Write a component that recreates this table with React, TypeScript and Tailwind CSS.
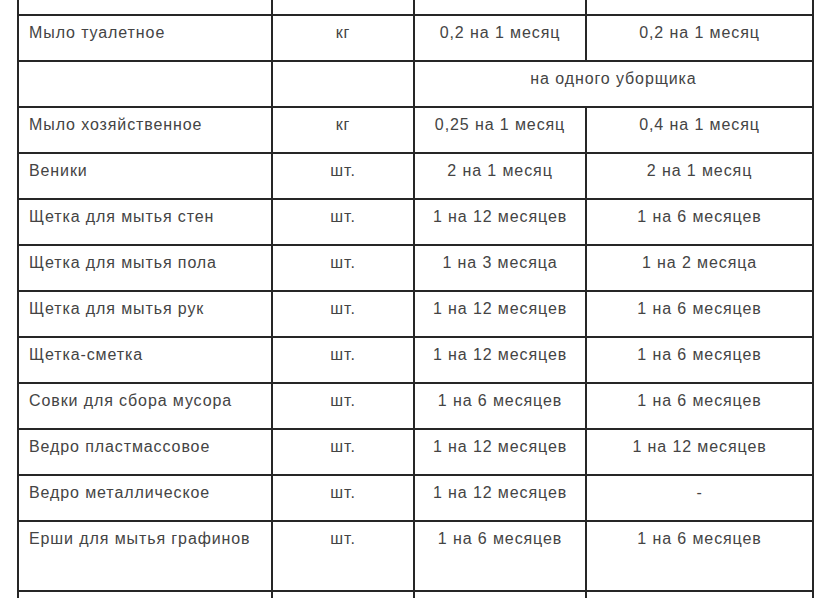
const rows: [string, string, string, string][] = [
  ["Мыло туалетное", "кг", "0,2 на 1 месяц", "0,2 на 1 месяц"],
  ["Мыло хозяйственное", "кг", "0,25 на 1 месяц", "0,4 на 1 месяц"],
  ["Веники", "шт.", "2 на 1 месяц", "2 на 1 месяц"],
  ["Щетка для мытья стен", "шт.", "1 на 12 месяцев", "1 на 6 месяцев"],
  ["Щетка для мытья пола", "шт.", "1 на 3 месяца", "1 на 2 месяца"],
  ["Щетка для мытья рук", "шт.", "1 на 12 месяцев", "1 на 6 месяцев"],
  ["Щетка-сметка", "шт.", "1 на 12 месяцев", "1 на 6 месяцев"],
  ["Совки для сбора мусора", "шт.", "1 на 6 месяцев", "1 на 6 месяцев"],
  ["Ведро пластмассовое", "шт.", "1 на 12 месяцев", "1 на 12 месяцев"],
  ["Ведро металлическое", "шт.", "1 на 12 месяцев", "-"],
  ["Ерши для мытья графинов", "шт.", "1 на 6 месяцев", "1 на 6 месяцев"],
];

const cell = "border-2 border-[#262626] align-top pt-[5px] leading-6";

export default function App() {
  return (
    <div className="h-[598px] w-[826px] overflow-hidden bg-white text-[16px] tracking-[0.9px] text-[#444] font-['Liberation_Sans',Arial,sans-serif]">
      <table className="ml-[17px] w-[795px] table-fixed border-collapse">
        <colgroup>
          <col className="w-[254px]" />
          <col className="w-[142px]" />
          <col className="w-[172px]" />
          <col className="w-[227px]" />
        </colgroup>
        <tbody>
          {/* tail of the row above */}
          <tr className="h-[15px]">
            <td className={`${cell} border-t-0`}></td>
            <td className={`${cell} border-t-0`}></td>
            <td className={`${cell} border-t-0`}></td>
            <td className={`${cell} border-t-0`}></td>
          </tr>
          {rows.map((r, i) => (
            <>
              <tr key={r[0]} className={i === rows.length - 1 ? "h-[70px]" : "h-[46px]"}>
                <td className={`${cell} pl-[10px]`}>{r[0]}</td>
                <td className={`${cell} text-center`}>{r[1]}</td>
                <td className={`${cell} text-center`}>{r[2]}</td>
                <td className={`${cell} text-center`}>{r[3]}</td>
              </tr>
              {i === 0 && (
                <tr key="note" className="h-[46px]">
                  <td className={cell}></td>
                  <td className={cell}></td>
                  <td className={`${cell} text-center`} colSpan={2}>
                    на одного уборщика
                  </td>
                </tr>
              )}
            </>
          ))}
          <tr className="h-[46px]">
            <td className={cell}></td>
            <td className={cell}></td>
            <td className={cell}></td>
            <td className={cell}></td>
          </tr>
        </tbody>
      </table>
    </div>
  );
}
